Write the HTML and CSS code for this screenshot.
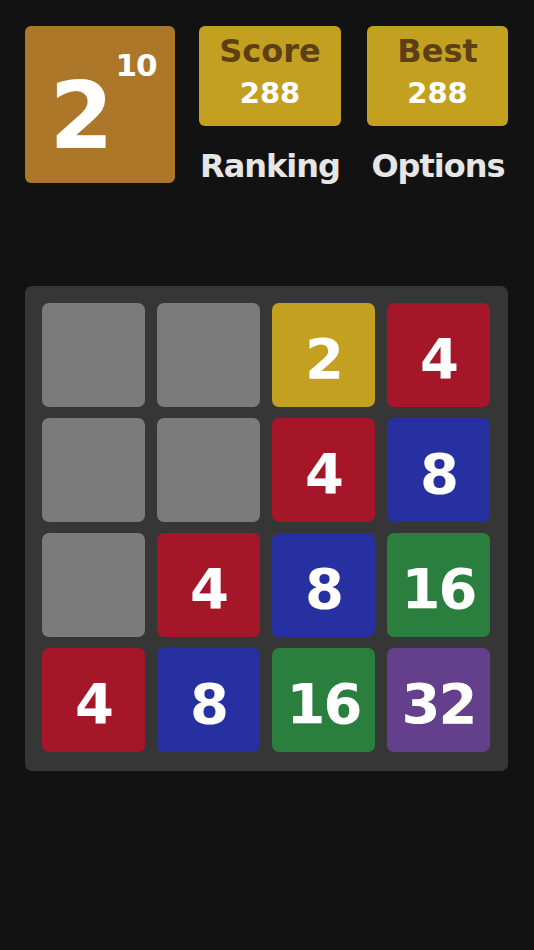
FILE: index.html
```html
<!DOCTYPE html>
<html>
<head>
<meta charset="utf-8">
<link rel="stylesheet" href="styles.css">
</head>
<body>
<div class="page">
  <header class="header">
    <div class="logo">
      <span class="logo-base">2</span><span class="logo-exp">10</span>
    </div>
    <div class="side">
      <div class="boxes">
        <div class="box">
          <div class="box-title">Score</div>
          <div class="box-value">288</div>
        </div>
        <div class="box">
          <div class="box-title">Best</div>
          <div class="box-value">288</div>
        </div>
      </div>
      <div class="links">
        <div class="link">Ranking</div>
        <div class="link">Options</div>
      </div>
    </div>
  </header>
  <main class="board">
    <div class="tile empty"></div>
    <div class="tile empty"></div>
    <div class="tile t2">2</div>
    <div class="tile t4">4</div>
    <div class="tile empty"></div>
    <div class="tile empty"></div>
    <div class="tile t4">4</div>
    <div class="tile t8">8</div>
    <div class="tile empty"></div>
    <div class="tile t4">4</div>
    <div class="tile t8">8</div>
    <div class="tile t16">16</div>
    <div class="tile t4">4</div>
    <div class="tile t8">8</div>
    <div class="tile t16">16</div>
    <div class="tile t32">32</div>
  </main>
</div>
</body>
</html>
```
FILE: styles.css
```css
html, body {
  margin: 0;
  padding: 0;
  background: #121212;
}
body {
  width: 534px;
  height: 950px;
  font-family: "DejaVu Sans", "Liberation Sans", sans-serif;
  font-weight: bold;
}
.page {
  padding: 26px 0 0 25px;
}
.header {
  display: flex;
  gap: 24px;
}
.logo {
  width: 150px;
  height: 157px;
  flex: none;
  background: #ad772a;
  border-radius: 6px;
  color: #fff;
  display: flex;
  justify-content: center;
  align-items: flex-start;
  padding-top: 45px;
  box-sizing: border-box;
}
.logo-base {
  font-size: 92px;
  line-height: 1;
  margin-left: 6px;
}
.logo-exp {
  font-size: 31px;
  line-height: 1;
  margin-top: -21px;
  margin-left: 2px;
  letter-spacing: -1px;
}
.side {
  display: flex;
  flex-direction: column;
}
.boxes {
  display: flex;
  gap: 26px;
}
.box {
  width: 142px;
  height: 100px;
  background: #c4a020;
  border-radius: 6px;
  display: flex;
  flex-direction: column;
  align-items: center;
}
.box + .box {
  width: 141px;
}
.box-title {
  color: #5c3f14;
  font-size: 32px;
  line-height: 1;
  margin-top: 9px;
}
.box-value {
  color: #fff;
  font-size: 29px;
  line-height: 1;
  margin-top: 12px;
}
.links {
  display: flex;
  gap: 26px;
  margin-top: 20px;
}
.link {
  width: 142px;
  text-align: center;
  color: #e6e6e6;
  font-size: 32px;
  line-height: 40px;
  letter-spacing: -1px;
  white-space: nowrap;
}
.board {
  margin-top: 100px;
  width: 483px;
  box-sizing: border-box;
  background: #363636;
  border-radius: 7px;
  padding: 17px 18px 19px 17px;
  display: grid;
  grid-template-columns: repeat(4, 103px);
  grid-auto-rows: 104px;
  gap: 11px 12px;
}
.tile {
  border-radius: 7px;
  color: #fff;
  font-size: 56px;
  display: flex;
  align-items: center;
  justify-content: center;
  padding-top: 6px;
  box-sizing: border-box;
  letter-spacing: -2px;
}
.empty { background: #7b7b7b; }
.t2 { background: #c4a020; }
.t4 { background: #a51728; }
.t8 { background: #2630a0; }
.t16 { background: #2a7e3e; }
.t32 { background: #643f8c; }
```
